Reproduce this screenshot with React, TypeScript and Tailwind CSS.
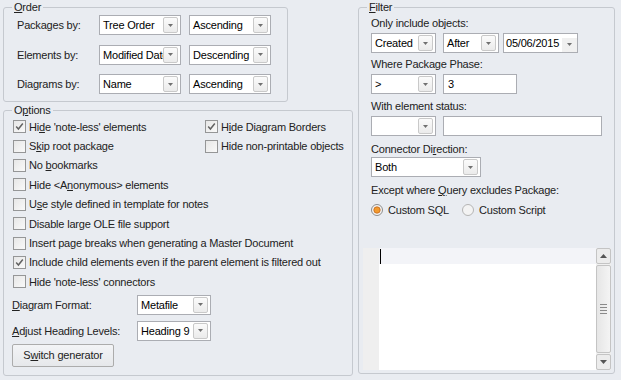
import React from 'react';

const font = "font-['Liberation_Sans',Arial,sans-serif]";

function Arrow({ up = false }: { up?: boolean }) {
  return (
    <svg width="5" height="3" viewBox="0 0 5 3" className="block">
      <path d={up ? 'M0 3h5L2.5 0z' : 'M0 0h5L2.5 3z'} fill="#707070" />
    </svg>
  );
}

function DropButton() {
  return (
    <span className="mr-[2px] flex h-[16px] w-[15px] shrink-0 items-center justify-center rounded-[2px] border border-[#c9c9c9] bg-gradient-to-b from-[#fbfbfb] to-[#ebebeb]">
      <Arrow />
    </span>
  );
}

function Combo({ value, w }: { value: string; w: string }) {
  return (
    <div className={`flex h-[20px] ${w} shrink-0 items-center border border-[#abadb3] bg-white`}>
      <span className="min-w-0 flex-1 overflow-hidden whitespace-nowrap pl-[3px] text-black">{value}</span>
      <DropButton />
    </div>
  );
}

function TextBox({ value, w }: { value: string; w: string }) {
  return (
    <div className={`flex h-[20px] ${w} shrink-0 items-center border border-[#abadb3] bg-white pl-[4px] text-black`}>
      {value}
    </div>
  );
}

function Check({ checked = false }: { checked?: boolean }) {
  return (
    <svg width="13" height="13" viewBox="0 0 13 13" className="block shrink-0">
      <defs>
        <linearGradient id="cbg" x1="0" y1="0" x2="1" y2="1">
          <stop offset="0" stopColor="#e6e6e6" />
          <stop offset="1" stopColor="#fafafa" />
        </linearGradient>
      </defs>
      <rect x="0.5" y="0.5" width="12" height="12" fill="url(#cbg)" stroke="#959697" />
      {checked && <path d="M3.2 6.6L5.4 9L9.8 3.5" fill="none" stroke="#626262" strokeWidth="1.5" />}
    </svg>
  );
}

function Radio({ on = false }: { on?: boolean }) {
  return (
    <svg width="12" height="12" viewBox="0 0 12 12" className="block shrink-0">
      <circle cx="6" cy="6" r="5.5" fill="#f3f3f3" stroke={on ? '#8c8c8c' : '#b4b4b4'} />
      {on && <circle cx="6" cy="6" r="3.2" fill="#f29a2e" stroke="#c2661c" strokeWidth="0.8" />}
    </svg>
  );
}

function CheckItem({ checked, children }: { checked?: boolean; children: React.ReactNode }) {
  return (
    <div className="flex items-center gap-[3px] whitespace-nowrap">
      <Check checked={checked} />
      <span>{children}</span>
    </div>
  );
}

function Group({ title, className, children }: { title: React.ReactNode; className: string; children: React.ReactNode }) {
  return (
    <fieldset className={`rounded-[3px] border border-[#c5c9cf] ${className}`}>
      <legend className="px-[2px] leading-[14px]">{title}</legend>
      {children}
    </fieldset>
  );
}

export default function App() {
  const rowH = 'h-[19.4px] flex items-center';
  return (
    <div className={`flex h-[380px] w-[621px] bg-[#e9ecf1] text-[11px] leading-[14px] tracking-[-0.2px] text-[#222] ${font}`}>
      <div className="ml-[3px] flex w-[350px] flex-col">
        <Group title={<><u>O</u>rder</>} className="h-[102px] w-[285px] pl-[8px]">
          <div className="flex flex-col gap-[9.5px] pt-[1px]">
            {[
              ['Packages by:', 'Tree Order', 'Ascending'],
              ['Elements by:', 'Modified Date', 'Descending'],
              ['Diagrams by:', 'Name', 'Ascending'],
            ].map(([label, a, b]) => (
              <div key={label} className="flex items-center">
                <span className="w-[87px] pl-[5px]">{label}</span>
                <Combo value={a} w="w-[82px]" />
                <span className="w-[8px]" />
                <Combo value={b} w="w-[82px]" />
              </div>
            ))}
          </div>
        </Group>

        <Group title={<>O<u>p</u>tions</>} className="mt-[1px] h-[273px] w-[350px] pl-[8px]">
          <div className="pl-[1px]">
            <div className={rowH}>
              <div className="w-[192px]">
                <CheckItem checked>Hi<u>d</u>e 'note-less' elements</CheckItem>
              </div>
              <CheckItem checked>H<u>i</u>de Diagram Borders</CheckItem>
            </div>
            <div className={rowH}>
              <div className="w-[192px]">
                <CheckItem>S<u>k</u>ip root package</CheckItem>
              </div>
              <CheckItem>Hide non-printable objects</CheckItem>
            </div>
            <div className={rowH}>
              <CheckItem>No <u>b</u>ookmarks</CheckItem>
            </div>
            <div className={rowH}>
              <CheckItem>Hide &lt;A<u>n</u>onymous&gt; elements</CheckItem>
            </div>
            <div className={rowH}>
              <CheckItem>U<u>s</u>e style defined in template for notes</CheckItem>
            </div>
            <div className={rowH}>
              <CheckItem>Disable large OLE file support</CheckItem>
            </div>
            <div className={rowH}>
              <CheckItem>Insert page breaks when generating a Master Document</CheckItem>
            </div>
            <div className={rowH}>
              <CheckItem checked>Include child elements even if the parent element is filtered out</CheckItem>
            </div>
            <div className={rowH}>
              <CheckItem>Hide 'note-less' connectors</CheckItem>
            </div>
          </div>
          <div className="mt-[3px] flex items-center">
            <span className="w-[125px]"><u>D</u>iagram Format:</span>
            <Combo value="Metafile" w="w-[74px]" />
          </div>
          <div className="mt-[6px] flex items-center">
            <span className="w-[125px]"><u>A</u>djust Heading Levels:</span>
            <Combo value="Heading 9" w="w-[74px]" />
          </div>
          <button className="mt-[3px] flex h-[23px] w-[102px] items-center justify-center rounded-[2px] border border-[#acacac] bg-gradient-to-b from-[#f3f4f6] to-[#e6e8eb]">
            S<u>w</u>itch generator
          </button>
        </Group>
      </div>

      <Group title={<><u>F</u>ilter</>} className="ml-[5px] h-[374px] w-[257px] pl-[4px] pr-[3px] [&>legend]:ml-[4px]">
        <div className="flex flex-col pl-[8px]">
          <span className="mt-[2px]">Only include objects:</span>
          <div className="mt-[3px] flex items-center">
            <Combo value="Created" w="w-[65px]" />
            <span className="w-[7px]" />
            <Combo value="After" w="w-[56px]" />
            <span className="w-[4px]" />
            <div className="flex h-[20px] w-[75px] items-center border border-[#abadb3] bg-white">
              <span className="flex-1 pl-[2px] text-black">05/06/2015</span>
              <span className="mt-[3px] flex h-[14px] w-[15px] items-center justify-center bg-[#f0f0f0]">
                <Arrow />
              </span>
            </div>
          </div>
          <span className="mt-[4px]">Where Package Phase:</span>
          <div className="mt-[3px] flex items-center">
            <Combo value=">" w="w-[65px]" />
            <span className="w-[7px]" />
            <TextBox value="3" w="w-[74px]" />
          </div>
          <span className="mt-[5px]">With element status:</span>
          <div className="mt-[3px] flex items-center">
            <Combo value="" w="w-[65px]" />
            <span className="w-[7px]" />
            <TextBox value="" w="w-[159px]" />
          </div>
          <span className="mt-[6px]">Connector Di<u>r</u>ection:</span>
          <div className="mt-[1px] flex items-center">
            <Combo value="Both" w="w-[110px]" />
          </div>
          <span className="mt-[6px]">Except where <u>Q</u>uery excludes Package:</span>
          <div className="mt-[6px] flex h-[14px] items-center">
            <Radio on />
            <span className="ml-[5px] w-[74px]">Custom SQL</span>
            <Radio />
            <span className="ml-[5px]">Custom Script</span>
          </div>
        </div>

        <div className="mt-[31px] flex h-[122px]">
          <div className="w-[16px] bg-[#efefef]" />
          <div className="flex-1 bg-white">
            <div className="flex h-[16px] items-center bg-[#f3f4f8] pl-[1px]">
              <span className="h-[15px] w-[1px] bg-black" />
            </div>
          </div>
          <div className="flex w-[15px] flex-col bg-[#f0f0f0]">
            <div className="flex h-[16px] items-center justify-center rounded-[2px] border border-[#c4c4c4] bg-[#ececec]">
              <svg width="7" height="4" viewBox="0 0 7 4"><path d="M0 4h7L3.5 0z" fill="#555" /></svg>
            </div>
            <div className="my-[1px] flex flex-1 flex-col items-center justify-center gap-[2px] rounded-[2px] border border-[#c4c4c4] bg-gradient-to-r from-[#e6e6e6] to-[#f4f4f4]">
              <span className="h-[1px] w-[7px] bg-[#8a8a8a]" />
              <span className="h-[1px] w-[7px] bg-[#8a8a8a]" />
              <span className="h-[1px] w-[7px] bg-[#8a8a8a]" />
              <span className="h-[1px] w-[7px] bg-[#8a8a8a]" />
            </div>
            <div className="flex h-[16px] items-center justify-center rounded-[2px] border border-[#c4c4c4] bg-[#ececec]">
              <svg width="7" height="4" viewBox="0 0 7 4"><path d="M0 0h7L3.5 4z" fill="#555" /></svg>
            </div>
          </div>
        </div>
      </Group>
    </div>
  );
}
